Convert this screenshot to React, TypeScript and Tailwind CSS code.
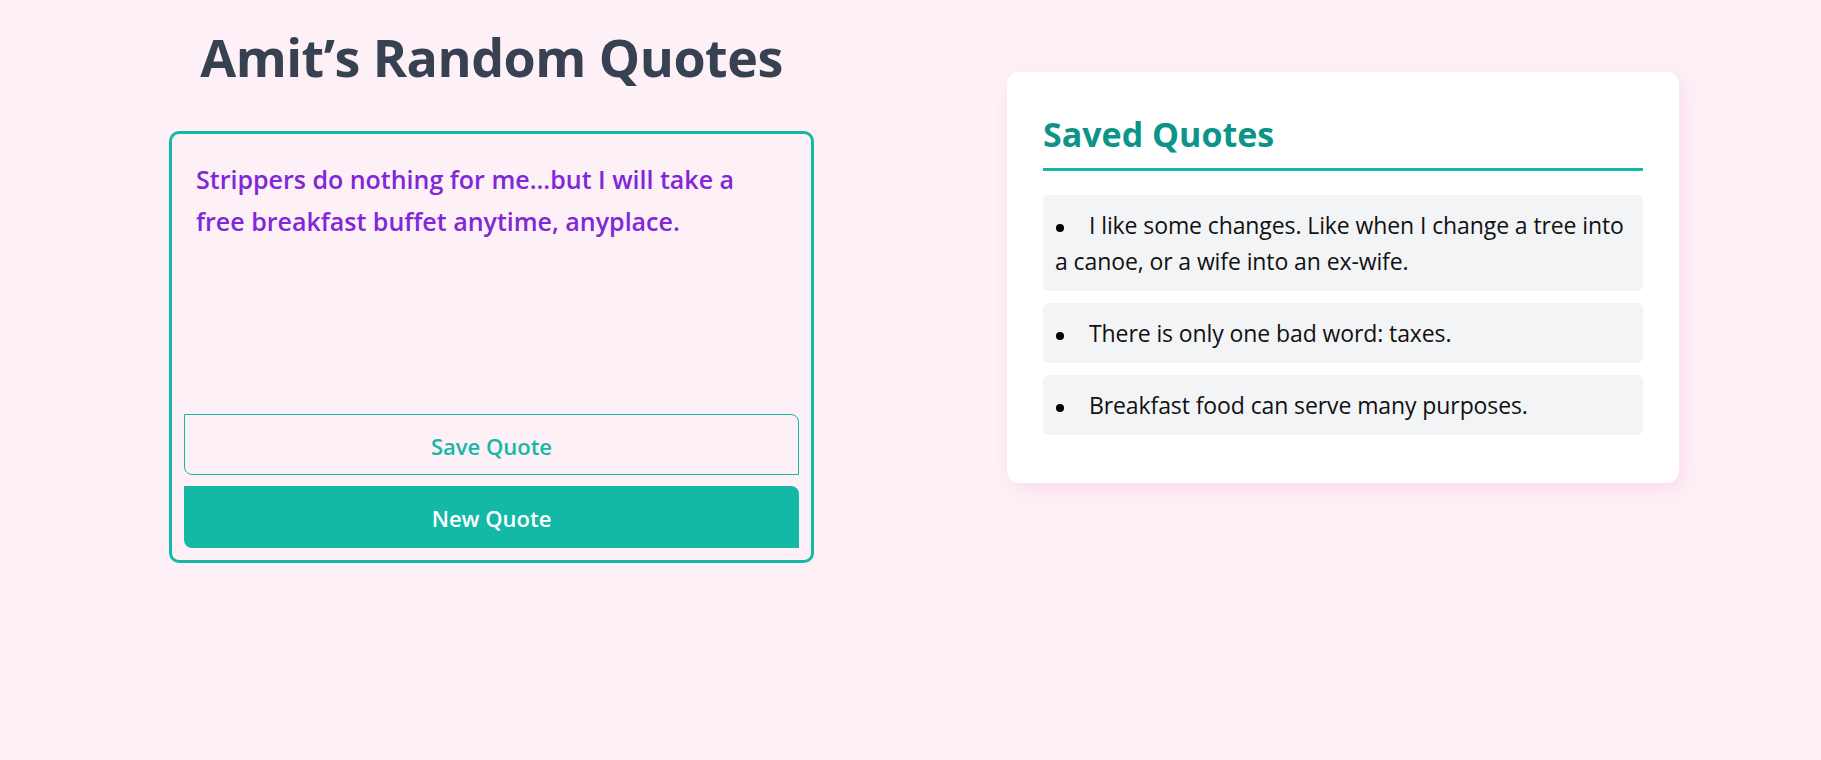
const savedQuotes = [
  "I like some changes. Like when I change a tree into a canoe, or a wife into an ex-wife.",
  "There is only one bad word: taxes.",
  "Breakfast food can serve many purposes."
];

export default function App() {
  return (
    <div className="min-h-[760px] w-full bg-[#fdf0f6] font-['Open_Sans',sans-serif]">
      <div className="flex items-start gap-[193px] pl-[169px]">
        <div className="flex w-[645px] flex-col items-center">
          <h1 className="mt-[24px] text-[52px] font-bold leading-[65px] tracking-[-0.5px] text-[#374151]">
            Amit’s Random Quotes
          </h1>
          <div className="mt-[42px] flex w-full flex-col rounded-[10px] border-[3px] border-[#14b8a6] p-3">
            <p className="h-[268px] py-3 pl-3 pr-[40px] text-[25px] font-semibold leading-[42px] text-[#8127d8]">
              Strippers do nothing for me...but I will take a free breakfast buffet anytime, anyplace.
            </p>
            <button className="h-[61px] rounded-tr-lg rounded-bl-lg border border-[#14b8a6] pt-[3px] text-[22px] font-semibold text-[#14b8a6]">
              Save Quote
            </button>
            <button className="mt-[11px] h-[62px] rounded-tr-lg rounded-bl-lg bg-[#14b8a6] pt-[3px] text-[22px] font-semibold text-white">
              New Quote
            </button>
          </div>
        </div>

        <div className="mt-[72px] w-[672px] rounded-xl bg-white p-9 shadow-[4px_6px_18px_rgba(236,72,153,0.10)]">
          <h2 className="mt-[6px] border-b-[3px] border-[#14b8a6] pb-[14px] text-[34px] font-bold leading-[40px] text-[#0d9488]">
            Saved Quotes
          </h2>
          <ul className="mt-6">
            {savedQuotes.map((q) => (
              <li key={q} className="mb-3 rounded-md bg-[#f3f4f6] p-3 text-[23px] leading-[36px] tracking-[-0.1px] text-[#111]">
                <span className="mr-[25px] ml-[1px] inline-block h-2 w-2 rounded-full bg-black align-middle" />
                {q}
              </li>
            ))}
          </ul>
        </div>
      </div>
    </div>
  );
}
